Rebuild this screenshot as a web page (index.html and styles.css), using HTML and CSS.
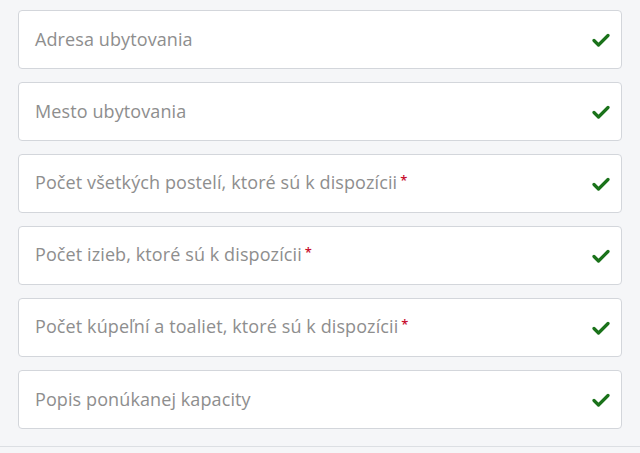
FILE: index.html
```html
<!DOCTYPE html>
<html lang="sk">
<head>
<meta charset="utf-8">
<link rel="stylesheet" href="styles.css">
</head>
<body>
<div class="form">
  <div class="field"><span class="label">Adresa ubytovania</span><svg class="check" viewBox="0 0 18 14"><path d="M2 7.5 L6.5 12 L16 2.5"/></svg></div>
  <div class="field"><span class="label">Mesto ubytovania</span><svg class="check" viewBox="0 0 18 14"><path d="M2 7.5 L6.5 12 L16 2.5"/></svg></div>
  <div class="field"><span class="label">Počet všetkých postelí, ktoré sú k dispozícii<span class="req">*</span></span><svg class="check" viewBox="0 0 18 14"><path d="M2 7.5 L6.5 12 L16 2.5"/></svg></div>
  <div class="field"><span class="label">Počet izieb, ktoré sú k dispozícii<span class="req">*</span></span><svg class="check" viewBox="0 0 18 14"><path d="M2 7.5 L6.5 12 L16 2.5"/></svg></div>
  <div class="field"><span class="label">Počet kúpeľní a toaliet, ktoré sú k dispozícii<span class="req">*</span></span><svg class="check" viewBox="0 0 18 14"><path d="M2 7.5 L6.5 12 L16 2.5"/></svg></div>
  <div class="field"><span class="label">Popis ponúkanej kapacity</span><svg class="check" viewBox="0 0 18 14"><path d="M2 7.5 L6.5 12 L16 2.5"/></svg></div>
</div>
<div class="divider"></div>
</body>
</html>
```
FILE: styles.css
```css
html, body {
  margin: 0;
  padding: 0;
  background: #f5f6f8;
  height: 453px;
  overflow: hidden;
}
body {
  font-family: "Open Sans", sans-serif;
}
.form {
  display: flex;
  flex-direction: column;
  gap: 13px;
  padding: 10px 18px 0 18px;
}
.field {
  box-sizing: border-box;
  height: 59px;
  background: #fff;
  border: 1px solid #d3d6db;
  border-radius: 4px;
  display: flex;
  align-items: center;
  justify-content: space-between;
  padding: 0 11px 0 16px;
}
.label {
  font-size: 18px;
  line-height: 22px;
  color: #8e8e8e;
  letter-spacing: 0.1px;
  position: relative;
  top: -1px;
}
.req {
  color: #c8102e;
  font-size: 13px;
  font-weight: 600;
  margin-left: 3px;
  position: relative;
  top: -4px;
}
.check {
  width: 18px;
  height: 14px;
  fill: none;
  stroke: #1a721a;
  stroke-width: 3.2;
  stroke-linecap: round;
  stroke-linejoin: round;
}
.divider {
  margin-top: 17px;
  height: 1px;
  background: #dcdfe3;
}
```
